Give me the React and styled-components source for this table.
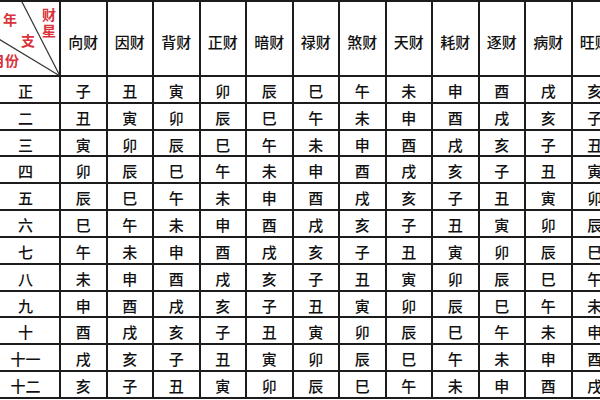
import React from "react";
import styled, { createGlobalStyle } from "styled-components";

const GlobalStyle = createGlobalStyle`
  html, body {
    margin: 0;
    padding: 0;
    background: #fff;
    overflow: hidden;
  }
  body {
    font-family: "Noto Sans CJK SC", "Noto Sans", sans-serif;
  }
`;

const Page = styled.div`
  width: 600px;
  height: 400px;
  overflow: hidden;
  background: #fff;
`;

// table lines come from the dark background showing through the gaps
const Grid = styled.div`
  display: grid;
  grid-template-columns: 67px repeat(12, 44.5px);
  grid-template-rows: 73px repeat(12, 24.83px);
  gap: 2px;
  padding: 2px;
  margin-left: -10px;
  background: #1c1c1c;
  width: max-content;
`;

const Cell = styled.div`
  background: #fff;
  display: flex;
  align-items: center;
  justify-content: center;
  color: #111;
  font-size: 15px;
  font-weight: 500;
  line-height: 1;
  padding-top: ${(p) => (p.$head ? "5px" : "2px")};
  box-sizing: border-box;
  white-space: nowrap;
  overflow: hidden;
`;

const CornerCell = styled.div`
  background: #fff;
  position: relative;
  overflow: hidden;
  display: grid;
  grid-template-columns: 11px 18px 21px 17px;
  grid-template-rows: 10px 14px 7px 14px 6px 14px 8px;
`;

const Diagonals = styled.svg`
  position: absolute;
  left: 0;
  top: 0;
  width: 67px;
  height: 73px;
`;

const RedLabel = styled.span`
  position: relative;
  grid-column: ${(p) => p.$col};
  grid-row: ${(p) => p.$row};
  align-self: start;
  justify-self: start;
  color: #d8323a;
  font-size: 14px;
  line-height: 14px;
  font-weight: 700;
  white-space: nowrap;
`;

const StackLabel = styled(RedLabel)`
  writing-mode: vertical-rl;
  letter-spacing: 2px;
  margin-top: 6px;
`;

const MonthLabel = styled(RedLabel)`
  margin-left: -1px;
`;

const headers = ["向财", "因财", "背财", "正财", "暗财", "禄财", "煞财", "天财", "耗财", "逐财", "病财", "旺财"];
const months = ["正", "二", "三", "四", "五", "六", "七", "八", "九", "十", "十一", "十二"];
const branches = ["子", "丑", "寅", "卯", "辰", "巳", "午", "未", "申", "酉", "戌", "亥"];

export default function App() {
  return (
    <Page>
      <GlobalStyle />
      <Grid>
        <CornerCell>
          <Diagonals viewBox="0 0 67 73">
            <line x1="29" y1="-2" x2="68" y2="74" stroke="#333" strokeWidth="1.2" />
            <line x1="0" y1="33" x2="68" y2="74" stroke="#333" strokeWidth="1.2" />
          </Diagonals>
          <RedLabel $col="2" $row="2">年</RedLabel>
          <StackLabel $col="4" $row="1 / 5">财星</StackLabel>
          <RedLabel $col="3" $row="4">支</RedLabel>
          <MonthLabel $col="1 / 4" $row="6">月份</MonthLabel>
        </CornerCell>
        {headers.map((h) => (
          <Cell key={h} $head>{h}</Cell>
        ))}
        {months.map((m, r) => (
          <React.Fragment key={m}>
            <Cell>{m}</Cell>
            {branches.map((_, c) => (
              <Cell key={c}>{branches[(r + c) % 12]}</Cell>
            ))}
          </React.Fragment>
        ))}
      </Grid>
    </Page>
  );
}
